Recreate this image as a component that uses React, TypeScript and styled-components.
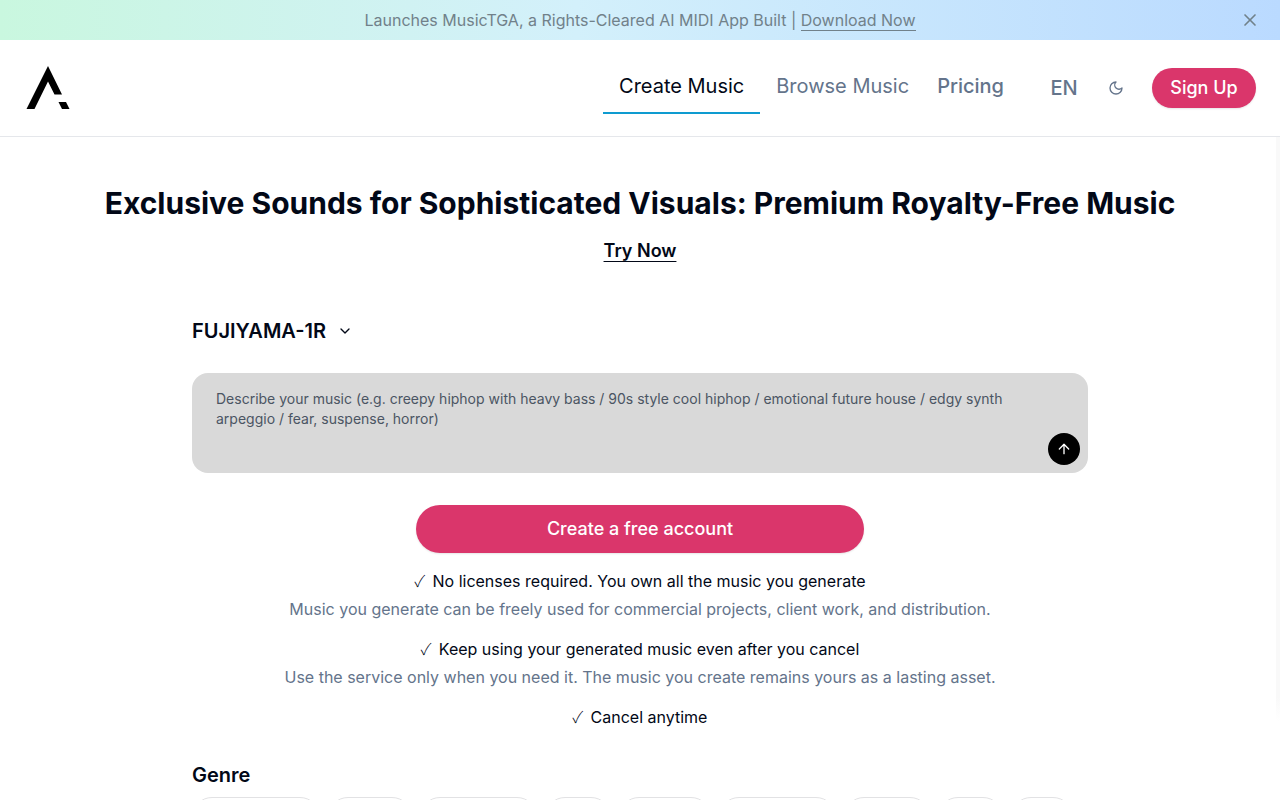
import React from "react";
import styled, { createGlobalStyle } from "styled-components";
import { ArrowUp, ChevronDown, X } from "lucide-react";

const GlobalStyle = createGlobalStyle`
  *, *::before, *::after { box-sizing: border-box; }
  body {
    margin: 0;
    background: #fff;
    color: #020817;
    font-family: Inter, "Liberation Sans", sans-serif;
    font-size: 16px;
    line-height: 24px;
  }
  button, textarea, select { font: inherit; color: inherit; }
  button { cursor: pointer; }
`;

const Banner = styled.aside`
  display: grid;
  grid-template-columns: 40px 1fr 40px;
  align-items: center;
  height: 40px;
  padding: 0 10px;
  background: linear-gradient(to right, #c9f7df, #d3f0fb 45%, #badaff);
  color: #71818a;
`;

const BannerText = styled.p`
  grid-column: 2;
  margin: 0;
  text-align: center;
`;

const BannerLink = styled.a`
  color: inherit;
  text-decoration: none;
  border-bottom: 1px solid currentColor;
`;

const IconButton = styled.button`
  display: grid;
  place-items: center;
  width: 40px;
  height: 40px;
  padding: 0;
  border: 0;
  background: none;
`;

const Header = styled.header`
  display: flex;
  align-items: center;
  justify-content: space-between;
  height: 97px;
  padding: 0 24px;
  border-bottom: 1px solid #e5e7eb;
  color: #64748b;
`;

const HomeLink = styled.a`
  display: flex;
  color: #000;
`;

const HeaderEnd = styled.div`
  display: flex;
  align-items: center;
`;

const Nav = styled.nav`
  display: flex;
  margin-right: 24px;
`;

const NavLink = styled.a<{ $active?: boolean; $strong?: boolean }>`
  height: 52px;
  padding: 10px ${(p) => (p.$strong ? 12 : 16)}px;
  border-bottom: 2px solid ${(p) => (p.$active ? "#0e9bd0" : "transparent")};
  color: ${(p) => (p.$active ? "#020817" : "#64748b")};
  font-size: 20px;
  font-weight: ${(p) => (p.$strong ? 500 : 400)};
  line-height: 28px;
  text-decoration: none;
`;

const Language = styled.button`
  width: 48px;
  height: 40px;
  margin-right: 8px;
  padding: 0;
  border: 0;
  background: none;
  font-size: 20px;
  font-weight: 500;
`;

const PrimaryButton = styled.button<{ $wide?: boolean }>`
  display: block;
  width: ${(p) => (p.$wide ? "50%" : "104px")};
  height: ${(p) => (p.$wide ? "48px" : "40px")};
  margin: ${(p) => (p.$wide ? "32px auto 0" : "0 0 0 16px")};
  padding: 0;
  border: 0;
  border-radius: 24px;
  background: #da366b;
  box-shadow: 0 1px 2px rgba(0, 0, 0, 0.1);
  color: #fff;
  font-size: 18px;
  font-weight: 500;
`;

const Page = styled.div`
  position: relative;
`;

const DrawerEdge = styled.div`
  position: absolute;
  top: 0;
  right: 0;
  width: 4px;
  height: 584px;
  background: linear-gradient(to bottom, #f9f9f9 96%, #fff);
`;

const Hero = styled.section`
  padding: 46px 24px 0;
  text-align: center;
`;

const Title = styled.h1`
  margin: 0;
  font-size: 30px;
  font-weight: 700;
  line-height: 40px;
`;

const TryLink = styled.a`
  display: inline-block;
  margin-top: 16px;
  color: inherit;
  font-size: 18px;
  font-weight: 600;
  line-height: 24px;
  text-decoration: underline 1px;
  text-decoration-skip-ink: none;
  text-underline-offset: 4px;
`;

const Main = styled.main`
  width: 70%;
  margin: 0 auto;
  padding-top: 48px;
`;

const ModelPicker = styled.label`
  display: inline-grid;
  align-items: center;
  height: 40px;
`;

const ModelSelect = styled.select`
  grid-area: 1 / 1;
  appearance: none;
  padding: 0 26px 0 0;
  border: 0;
  background: none;
  font-size: 20px;
  font-weight: 600;
`;

const PickerArrow = styled(ChevronDown)`
  grid-area: 1 / 1;
  justify-self: end;
  pointer-events: none;
`;

const Prompt = styled.form`
  display: flex;
  align-items: flex-end;
  height: 100px;
  margin-top: 22px;
  padding: 8px;
  border-radius: 16px;
  background: #d9d9d9;
`;

const PromptInput = styled.textarea`
  flex: 1;
  height: 84px;
  margin-right: 16px;
  padding: 8px 16px;
  border: 0;
  outline: 0;
  background: none;
  resize: none;
  font-size: 14px;
  line-height: 20px;

  &::placeholder { color: #4b5563; opacity: 1; }
`;

const SendButton = styled(IconButton)`
  width: 32px;
  height: 32px;
  border-radius: 50%;
  background: #000;
  color: #fff;
`;

const Benefits = styled.ul`
  margin: 16px 0 0;
  padding: 0;
  list-style: none;
  text-align: center;
`;

const Benefit = styled.li`
  margin-bottom: 16px;
`;

const BenefitText = styled.p<{ $muted?: boolean }>`
  margin: ${(p) => (p.$muted ? "4px 0 0" : "0")};
  color: ${(p) => (p.$muted ? "#64748b" : "#020817")};
`;

const Check = styled.span`
  margin-right: 3px;
  font-family: "Noto Sans CJK JP", sans-serif;
  font-weight: 300;
  line-height: 16px;
`;

const GenreTitle = styled.h2`
  margin: 32px 0 8px;
  font-size: 20px;
  font-weight: 600;
  line-height: 28px;
`;

const Chips = styled.div`
  display: flex;
  gap: 8px;
`;

const Chip = styled.button<{ $width: number }>`
  width: ${(p) => p.$width}px;
  height: 40px;
  padding: 0;
  border: 1px solid #e2e2e4;
  border-radius: 20px;
  background: #fff;
`;

const benefits = [
  {
    title: "No licenses required. You own all the music you generate",
    note: "Music you generate can be freely used for commercial projects, client work, and distribution.",
  },
  {
    title: "Keep using your generated music even after you cancel",
    note: "Use the service only when you need it. The music you create remains yours as a lasting asset.",
  },
  { title: "Cancel anytime" },
];

const chipWidths = [128, 84, 117, 66, 92, 117, 86, 65, 62];

function Logo() {
  return (
    <svg width="48" height="48" viewBox="0 0 48 48" fill="currentColor" aria-hidden="true">
      <path d="M24 2 38 30.500H30.500L24 17.500 10.500 45H2.500Z" />
      <path d="M34.500 38H42L45.500 45H38Z" />
    </svg>
  );
}

function MoonIcon() {
  return (
    <svg
      width="16"
      height="16"
      viewBox="0 0 24 24"
      fill="none"
      stroke="currentColor"
      strokeWidth="2"
      strokeLinecap="round"
      strokeLinejoin="round"
      aria-hidden="true"
    >
      <path d="M12 3a6 6 0 0 0 9 9 9 9 0 1 1-9-9Z" />
    </svg>
  );
}

export default function App() {
  return (
    <>
      <GlobalStyle />
      <Banner>
        <BannerText>
          Launches MusicTGA, a Rights-Cleared AI MIDI App Built |{" "}
          <BannerLink href="#download">Download Now</BannerLink>
        </BannerText>
        <IconButton type="button" aria-label="Close">
          <X size={20} strokeWidth={2} />
        </IconButton>
      </Banner>
      <Header>
        <HomeLink href="#home" aria-label="Home">
          <Logo />
        </HomeLink>
        <HeaderEnd>
          <Nav>
            <NavLink href="#create" $active>Create Music</NavLink>
            <NavLink href="#browse">Browse Music</NavLink>
            <NavLink href="#pricing" $strong>Pricing</NavLink>
          </Nav>
          <Language type="button">EN</Language>
          <IconButton type="button" aria-label="Dark mode">
            <MoonIcon />
          </IconButton>
          <PrimaryButton type="button">Sign Up</PrimaryButton>
        </HeaderEnd>
      </Header>
      <Page>
        <DrawerEdge />
        <Hero>
          <Title>Exclusive Sounds for Sophisticated Visuals: Premium Royalty-Free Music</Title>
          <TryLink href="#try">Try Now</TryLink>
        </Hero>
        <Main>
          <ModelPicker>
            <ModelSelect aria-label="Model">
              <option>FUJIYAMA-1R</option>
            </ModelSelect>
            <PickerArrow size={16} />
          </ModelPicker>
          <Prompt>
            <PromptInput
              aria-label="Describe your music"
              placeholder="Describe your music (e.g. creepy hiphop with heavy bass / 90s style cool hiphop / emotional future house / edgy synth arpeggio / fear, suspense, horror)"
            />
            <SendButton type="button" aria-label="Generate">
              <ArrowUp size={16} />
            </SendButton>
          </Prompt>
          <PrimaryButton type="button" $wide>Create a free account</PrimaryButton>
          <Benefits>
            {benefits.map((item) => (
              <Benefit key={item.title}>
                <BenefitText>
                  <Check>✓</Check> {item.title}
                </BenefitText>
                {item.note && <BenefitText $muted>{item.note}</BenefitText>}
              </Benefit>
            ))}
          </Benefits>
          <GenreTitle>Genre</GenreTitle>
          <Chips>
            {chipWidths.map((width, index) => (
              <Chip key={index} type="button" $width={width} aria-label={`Genre ${index + 1}`} />
            ))}
          </Chips>
        </Main>
      </Page>
    </>
  );
}
